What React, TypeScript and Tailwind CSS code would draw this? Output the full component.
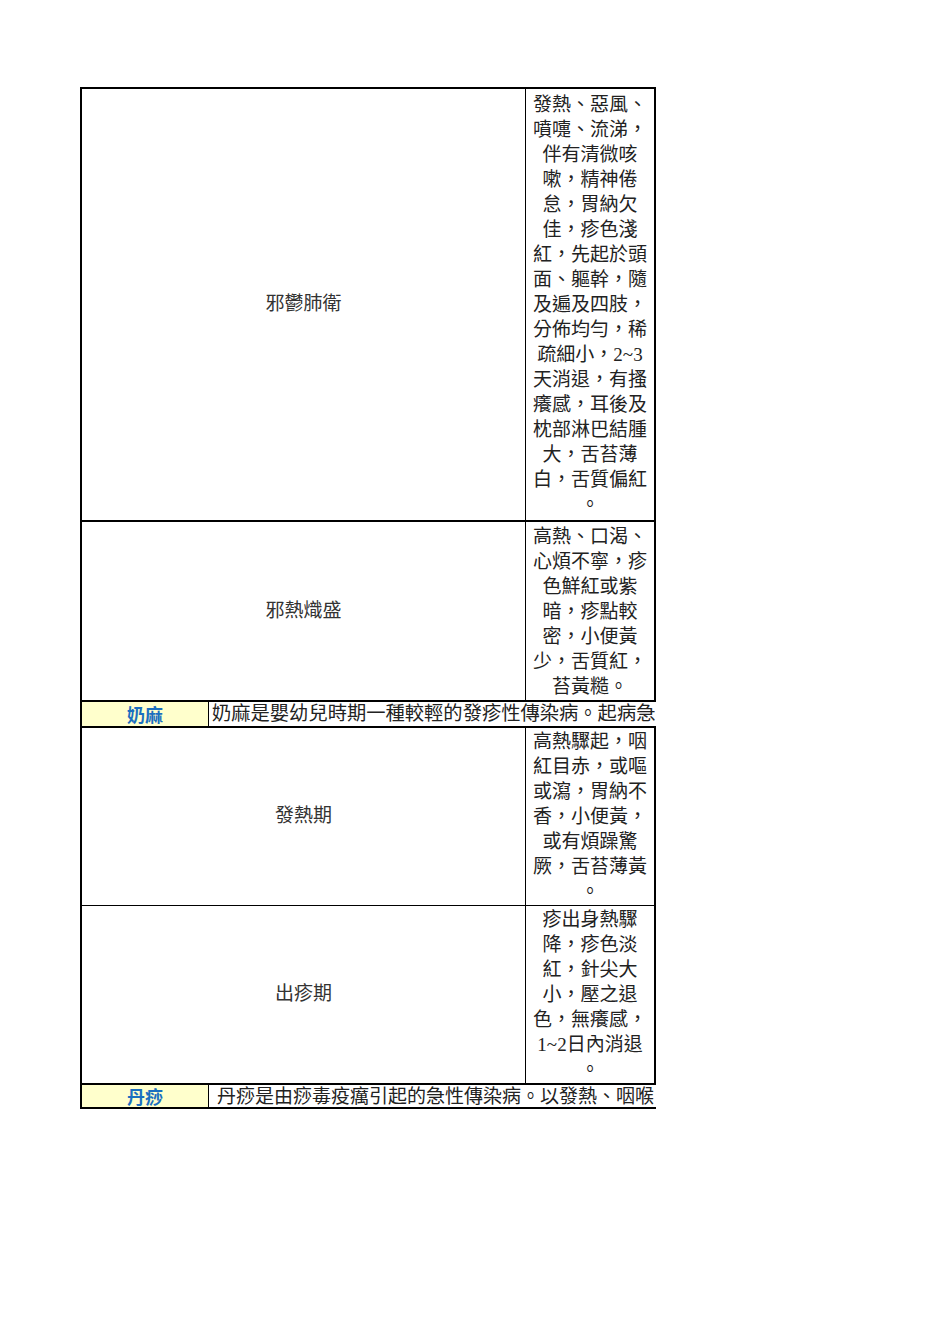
import React from 'react';

type BodyRow = {
    label: string;
    lines: string[];
    height: string;
    top: string;
};

const bodyFont = "font-['Liberation_Serif','Noto_Sans_CJK_TC',serif]";

const BodyRowView: React.FC<{ row: BodyRow }> = ({ row }) => (
    <div className={`flex border-x-2 border-black ${row.top} ${row.height}`}>
        <div className="flex w-[443px] items-center justify-center text-[19px] text-[#333]">
            {row.label}
        </div>
        <div className="flex w-[129px] flex-col justify-center border-l border-black text-center text-[19px] leading-[25px] text-[#222]">
            {row.lines.map((l, i) => (
                <div key={i} className="whitespace-nowrap">
                    {l}
                </div>
            ))}
        </div>
    </div>
);

const HeaderRow: React.FC<{ name: string; text: string; pad: string; height: string }> = ({
    name,
    text,
    pad,
    height,
}) => (
    <div className={`flex border-l-2 border-t-2 border-black ${height}`}>
        <div className="flex w-[126px] items-center justify-center bg-[#ffffcc] font-['Noto_Sans_CJK_TC',sans-serif] text-[18px] font-bold leading-none text-[#1a6fc0]">
            {name}
        </div>
        <div
            className={`flex w-[447px] items-center overflow-hidden whitespace-nowrap border-l border-black leading-none text-[#222] ${pad}`}
        >
            {text}
        </div>
    </div>
);

const App: React.FC = () => {
    const rows1: BodyRow[] = [
        {
            label: '邪鬱肺衛',
            top: 'border-t-2',
            height: 'h-[433px]',
            lines: [
                '發熱、惡風、',
                '噴嚏、流涕，',
                '伴有清微咳',
                '嗽，精神倦',
                '怠，胃納欠',
                '佳，疹色淺',
                '紅，先起於頭',
                '面、軀幹，隨',
                '及遍及四肢，',
                '分佈均勻，稀',
                '疏細小，2~3',
                '天消退，有搔',
                '癢感，耳後及',
                '枕部淋巴結腫',
                '大，舌苔薄',
                '白，舌質偏紅',
                '。',
            ],
        },
        {
            label: '邪熱熾盛',
            top: 'border-t-2',
            height: 'h-[180px]',
            lines: [
                '高熱、口渴、',
                '心煩不寧，疹',
                '色鮮紅或紫',
                '暗，疹點較',
                '密，小便黃',
                '少，舌質紅，',
                '苔黃糙。',
            ],
        },
    ];

    const rows2: BodyRow[] = [
        {
            label: '發熱期',
            top: 'border-t-2',
            height: 'h-[179px]',
            lines: [
                '高熱驟起，咽',
                '紅目赤，或嘔',
                '或瀉，胃納不',
                '香，小便黃，',
                '或有煩躁驚',
                '厥，舌苔薄黃',
                '。',
            ],
        },
        {
            label: '出疹期',
            top: 'border-t',
            height: 'h-[178px]',
            lines: [
                '疹出身熱驟',
                '降，疹色淡',
                '紅，針尖大',
                '小，壓之退',
                '色，無癢感，',
                '1~2日內消退',
                '。',
            ],
        },
    ];

    return (
        <div className={`min-h-[1344px] w-full bg-white pt-[87px] ${bodyFont}`}>
            <div className="ml-[80px] flex w-[576px] flex-col">
                {rows1.map((r) => (
                    <BodyRowView key={r.label} row={r} />
                ))}
                <HeaderRow
                    name="奶麻"
                    text="奶麻是嬰幼兒時期一種較輕的發疹性傳染病。起病急"
                    pad="pl-[3px] text-[19.3px]"
                    height="h-[26px]"
                />
                {rows2.map((r) => (
                    <BodyRowView key={r.label} row={r} />
                ))}
                <div className="border-b-2 border-black">
                    <HeaderRow
                        name="丹痧"
                        text="丹痧是由痧毒疫癘引起的急性傳染病。以發熱、咽喉"
                        pad="pl-[8px] text-[19px]"
                        height="h-[24px]"
                    />
                </div>
            </div>
        </div>
    );
};

export default App;
